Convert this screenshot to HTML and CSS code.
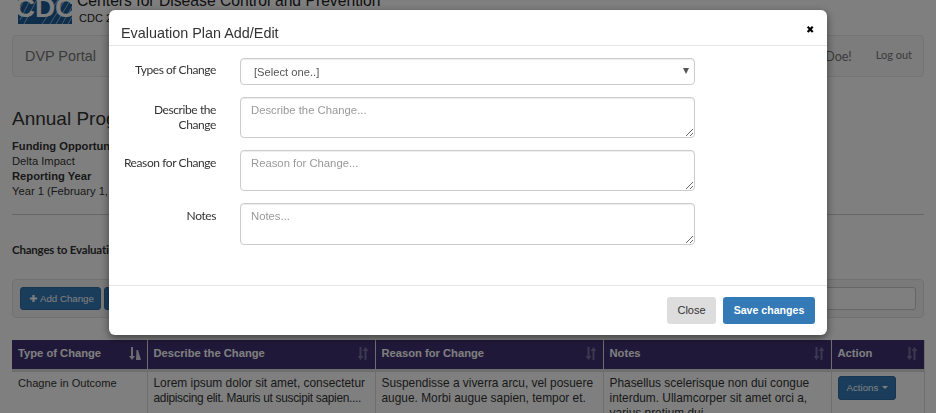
FILE: index.html
```html
<!DOCTYPE html>
<html lang="en">
<head>
<meta charset="utf-8">
<title>Evaluation Plan</title>
<link rel="stylesheet" href="styles.css">
</head>
<body>
<div class="page">
  <header class="brand">
    <svg class="logo" viewBox="0 0 54 38" aria-hidden="true"><rect width="54" height="38" fill="#1f5c99"/><path d="M-2 30 12 2M2 34 18 2M6 38 24 4M32 38 52 6M38 38 56 8M44 38 58 14M50 38 58 24M24 38 44 8" stroke="#8fb4d8" stroke-width="1" fill="none"/><text class="logo-text" x="27" y="31" text-anchor="middle">CDC</text></svg>
    <div class="brand-text">
      <div class="brand-name">Centers for Disease Control and Prevention</div>
      <div class="brand-sub">CDC 24/7: Saving Lives, Protecting People</div>
    </div>
  </header>
  <nav class="navbar">
    <span class="nav-title">DVP Portal</span>
    <span class="nav-user">Hello, John Doe!</span>
    <span class="nav-logout">Log out</span>
  </nav>
  <h1 class="page-title">Annual Program Report</h1>
  <dl class="meta">
    <dt>Funding Opportunity</dt>
    <dd>Delta Impact</dd>
    <dt>Reporting Year</dt>
    <dd>Year 1 (February 1, 2018 - January 31, 2019)</dd>
  </dl>
  <hr class="rule">
  <h2 class="section-title">Changes to Evaluation Plan</h2>
  <div class="well">
    <button class="btn btn-dark btn-add" type="button"><svg class="plus" viewBox="0 0 10 10" aria-hidden="true"><path d="M5 1v8M1 5h8" stroke="currentColor" stroke-width="2.4"/></svg>Add Change</button>
    <button class="btn btn-dark" type="button">Export</button>
    <input class="search" type="text" aria-label="Search">
  </div>
  <table class="grid">
    <colgroup><col class="c1"><col class="c2"><col class="c3"><col class="c4"><col class="c5"></colgroup>
    <thead>
      <tr>
        <th><span class="th-in">Type of Change<svg class="sort on" viewBox="0 0 12 13" aria-hidden="true"><path d="M2 0h2v9h2L3 13 0 9h2zM7.500 3h1.500L12 13H7z" fill="currentColor"/></svg></span></th>
        <th><span class="th-in">Describe the Change<svg class="sort" viewBox="0 0 12 13" aria-hidden="true"><path d="M2.500 0h2v9h2l-3 4-3-4h2zM7.500 13h2V4h2l-3-4-3 4h2z" fill="currentColor"/></svg></span></th>
        <th><span class="th-in">Reason for Change<svg class="sort" viewBox="0 0 12 13" aria-hidden="true"><path d="M2.500 0h2v9h2l-3 4-3-4h2zM7.500 13h2V4h2l-3-4-3 4h2z" fill="currentColor"/></svg></span></th>
        <th><span class="th-in">Notes<svg class="sort" viewBox="0 0 12 13" aria-hidden="true"><path d="M2.500 0h2v9h2l-3 4-3-4h2zM7.500 13h2V4h2l-3-4-3 4h2z" fill="currentColor"/></svg></span></th>
        <th><span class="th-in">Action<svg class="sort" viewBox="0 0 12 13" aria-hidden="true"><path d="M2.500 0h2v9h2l-3 4-3-4h2zM7.500 13h2V4h2l-3-4-3 4h2z" fill="currentColor"/></svg></span></th>
      </tr>
    </thead>
    <tbody>
      <tr>
        <td class="td-type">Chagne in Outcome</td>
        <td>Lorem ipsum dolor sit amet, consectetur <span class="tight">adipiscing elit. Mauris ut suscipit sapien....</span></td>
        <td>Suspendisse a viverra arcu, vel posuere augue. Morbi augue sapien, tempor et.</td>
        <td>Phasellus scelerisque non dui congue interdum. Ullamcorper sit amet orci a, varius pretium dui.</td>
        <td><button class="btn btn-dark btn-actions" type="button">Actions<span class="caret"></span></button></td>
      </tr>
    </tbody>
  </table>
</div>
<div class="backdrop"></div>
<section class="modal" role="dialog" aria-label="Evaluation Plan Add/Edit">
  <header class="modal-head">
    <h3 class="modal-title">Evaluation Plan Add/Edit</h3>
    <span class="modal-x">&#10006;</span>
  </header>
  <form class="modal-body">
    <label class="f-label f-label-top" for="f1">Types of Change</label>
    <div class="select-wrap"><select id="f1" class="f-select"><option>[Select one..]</option></select></div>
    <label class="f-label" for="f2">Describe the<br>Change</label>
    <textarea id="f2" class="f-area" placeholder="Describe the Change..."></textarea>
    <label class="f-label" for="f3">Reason for Change</label>
    <textarea id="f3" class="f-area" placeholder="Reason for Change..."></textarea>
    <label class="f-label" for="f4">Notes</label>
    <textarea id="f4" class="f-area f-last" placeholder="Notes..."></textarea>
  </form>
  <footer class="modal-foot">
    <button class="mbtn mbtn-close" type="button">Close</button>
    <button class="mbtn mbtn-save" type="button">Save changes</button>
  </footer>
</section>
</body>
</html>
```
FILE: styles.css
```css
* { box-sizing: border-box; }
html, body { margin: 0; height: 100%; overflow: hidden; }
body { background: #fff; color: #333; font: 11.200px/15px "Liberation Sans", Arial, sans-serif; }

.page { padding: 0 12px; margin-top: -14px; }

.brand { display: flex; gap: 5px; height: 49px; padding: 0 0 0 6px; }
.logo { width: 54px; height: 38px; flex: none; }
.logo-text { font: 700 28px "Liberation Sans", Arial, sans-serif; fill: #fff; }
.brand-text { color: #222; }
.brand-name { font-size: 15.700px; line-height: 18px; margin-top: 6px; }
.brand-sub { font-size: 11px; line-height: 13px; margin: 2px 0 0 2px; }

.navbar { display: flex; align-items: center; height: 42px; padding: 0 11px 0 12px; background: #f8f8f8; border: 1px solid #e7e7e7; border-radius: 4px; color: #777; }
.nav-title { font-size: 14.400px; flex: 1; }
.nav-user { font: 12.500px "Lato", sans-serif; margin-right: 24px; }
.nav-logout { font: 11px "Lato", sans-serif; margin-top: -3px; }

.page-title { font-size: 19px; font-weight: 400; line-height: 24px; margin: 30px 0 0; }

.meta { margin: 8px 0 0; }
.meta dt { font-weight: 700; }
.meta dd { margin: 0; }

.rule { border: 0; border-top: 1px solid #ccc; margin: 15px 0 0; }

.section-title { font: 700 11.500px/15px "Lato", sans-serif; letter-spacing: -.2px; margin: 27px 0 0; }

.well { display: flex; gap: 3px; height: 39px; margin-top: 22px; padding: 7px; background: #f5f5f5; border: 1px solid #e3e3e3; border-radius: 4px; }
.search { margin-left: auto; width: 400px; height: 23px; border: 1px solid #ccc; border-radius: 3px; background: #fff; }

.btn { display: inline-flex; align-items: center; height: 23px; padding: 0 8px; border: 1px solid #2e6da4; border-radius: 3px; font: 9.700px "Liberation Sans", Arial, sans-serif; white-space: nowrap; }
.btn-dark { background: #337ab7; color: #fff; }
.btn-add { width: 81px; }
.plus { width: 9px; height: 9px; margin-right: 2px; flex: none; }

.grid { width: 912px; table-layout: fixed; border-collapse: collapse; margin-top: 22px; }
.c1 { width: 135px; }
.c2, .c3, .c4 { width: 228px; }
.c5 { width: 93px; }
.grid th { height: 30px; padding: 0 6px 2px; background: #3f3173; color: #fff; border-left: 1px solid #ddd; border-bottom: 3px solid #ddd; text-align: left; font-size: 11.200px; }
.grid th:first-child, .grid td:first-child { border-left: 0; }
.th-in { display: flex; align-items: center; justify-content: space-between; }
.sort { width: 12px; height: 13px; color: #76709f; flex: none; }
.sort.on { color: #d8d4e4; }
.grid td { padding: 4px 2px 6px 6px; vertical-align: top; border-left: 1px solid #ddd; font-size: 11.900px; color: #333; }
.grid td.td-type { font-size: 11.100px; }
.tight { white-space: nowrap; letter-spacing: -.3px; }
.grid tr td:last-child, .grid tr th:last-child { border-right: 1px solid #ddd; }
.btn-actions { height: 24px; width: 58px; padding: 0 8px; }
.caret { width: 0; height: 0; margin-left: 4px; border: 3px solid transparent; border-top-color: #fff; border-bottom: 0; }

.backdrop { position: fixed; inset: 0; background: rgba(0, 0, 0, .5); }

.modal { position: fixed; left: 109px; top: 10px; width: 718px; height: 325px; display: flex; flex-direction: column; background: #fff; border-radius: 6px; box-shadow: 0 3px 9px rgba(0, 0, 0, .5); }
.modal-head { display: flex; align-items: center; justify-content: space-between; height: 36px; padding: 8px 13px 0 12px; border-bottom: 1px solid #e5e5e5; }
.modal-title { margin: 4px 0 0; font-size: 14.400px; font-weight: 400; color: #333; }
.modal-x { font-size: 10px; line-height: 10px; color: #000; margin-top: -4px; }

.modal-body { flex: 1; display: grid; grid-template-columns: 107px 455px; column-gap: 24px; grid-auto-rows: min-content; padding-top: 12px; justify-content: start; }
.f-label { grid-column: 1; padding-top: 5px; text-align: right; font: 12px/15px "Lato", sans-serif; letter-spacing: -.41px; color: #333; min-height: 27px; }
.f-label-top { padding-top: 4px; }
.select-wrap { position: relative; height: 27px; margin-bottom: 12px; }
.select-wrap::after { content: ""; position: absolute; right: 6px; top: 10px; border: 3px solid transparent; border-top: 6px solid #555; border-bottom: 0; pointer-events: none; }
.f-select { appearance: none; width: 100%; height: 27px; padding: 0 13px; background: #fff; border: 1px solid #ccc; border-radius: 4px; box-shadow: inset 0 1px 1px rgba(0, 0, 0, .075); font: 11.200px "Liberation Sans", Arial, sans-serif; color: #555; }
.f-area { display: block; width: 455px; height: 41px; margin: 0 0 12px; padding: 5px 10px; border: 1px solid #ccc; border-radius: 4px; box-shadow: inset 0 1px 1px rgba(0, 0, 0, .075); font: 11.300px/15px "Liberation Sans", Arial, sans-serif; color: #555; }
.f-last { height: 42px; }
.f-area::placeholder { color: #999; opacity: 1; }

.modal-foot { display: flex; justify-content: flex-end; gap: 7px; height: 50px; padding: 11px 12px 0; border-top: 1px solid #e5e5e5; }
.mbtn { height: 27px; padding: 0 0 2px; border: 0; border-radius: 3px; font: 11px "Liberation Sans", Arial, sans-serif; }
.mbtn-close { width: 49px; background: #ddd; color: #333; }
.mbtn-save { width: 92px; background: #337ab7; color: #fff; font-weight: 700; font-size: 10.600px; }
```
